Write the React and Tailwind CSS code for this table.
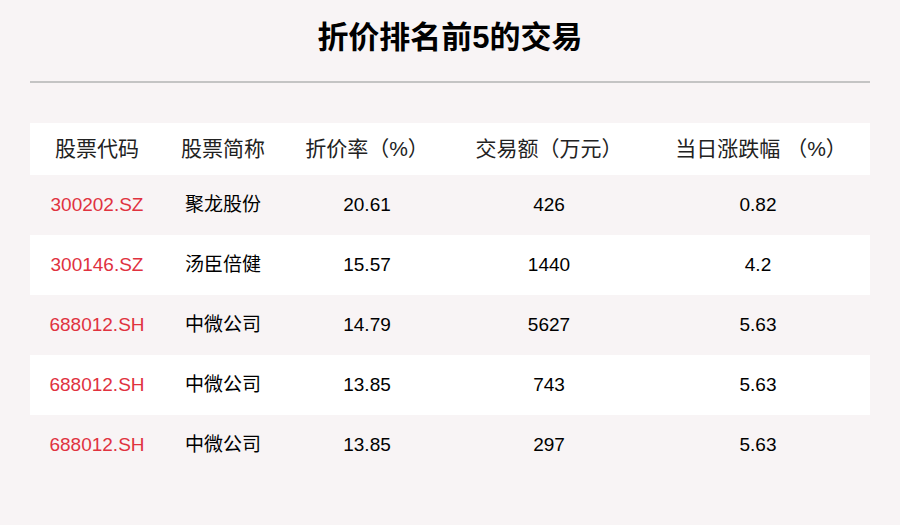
import React from 'react';

const rows = [
  ['300202.SZ', '聚龙股份', '20.61', '426', '0.82'],
  ['300146.SZ', '汤臣倍健', '15.57', '1440', '4.2'],
  ['688012.SH', '中微公司', '14.79', '5627', '5.63'],
  ['688012.SH', '中微公司', '13.85', '743', '5.63'],
  ['688012.SH', '中微公司', '13.85', '297', '5.63'],
];

const cols = 'grid grid-cols-[134px_118px_170px_194px_224px]';

export default function App() {
  return (
    <div
      className="w-[900px] h-[525px] bg-[#f8f4f5] px-[30px] overflow-hidden"
      style={{ fontFamily: '"Liberation Sans", "Noto Sans CJK SC", sans-serif' }}
    >
      {/* Title */}
      <h1 className="pt-[18px] h-[81px] text-center text-[31px] leading-[40px] font-bold text-black">
        折价排名前5的交易
      </h1>
      <div className="h-[2px] bg-[#c4c4c4]" />

      {/* Table */}
      <div className="mt-[40px]">
        <div className={`${cols} h-[52px] items-center bg-white text-[21px] text-[#222] text-center`}>
          <span>股票代码</span>
          <span>股票简称</span>
          <span>折价率（%）</span>
          <span>交易额（万元）</span>
          <span className="pl-[6px]">
            当日涨跌幅<span className="ml-[6px]">（%）</span>
          </span>
        </div>
        {rows.map((r, i) => (
          <div
            key={i}
            className={`${cols} h-[60px] items-center text-[19px] text-center text-black ${i % 2 === 1 ? 'bg-white' : ''}`}
          >
            <span className="text-[#e0323f]">{r[0]}</span>
            <span>{r[1]}</span>
            <span>{r[2]}</span>
            <span>{r[3]}</span>
            <span>{r[4]}</span>
          </div>
        ))}
      </div>
    </div>
  );
}
